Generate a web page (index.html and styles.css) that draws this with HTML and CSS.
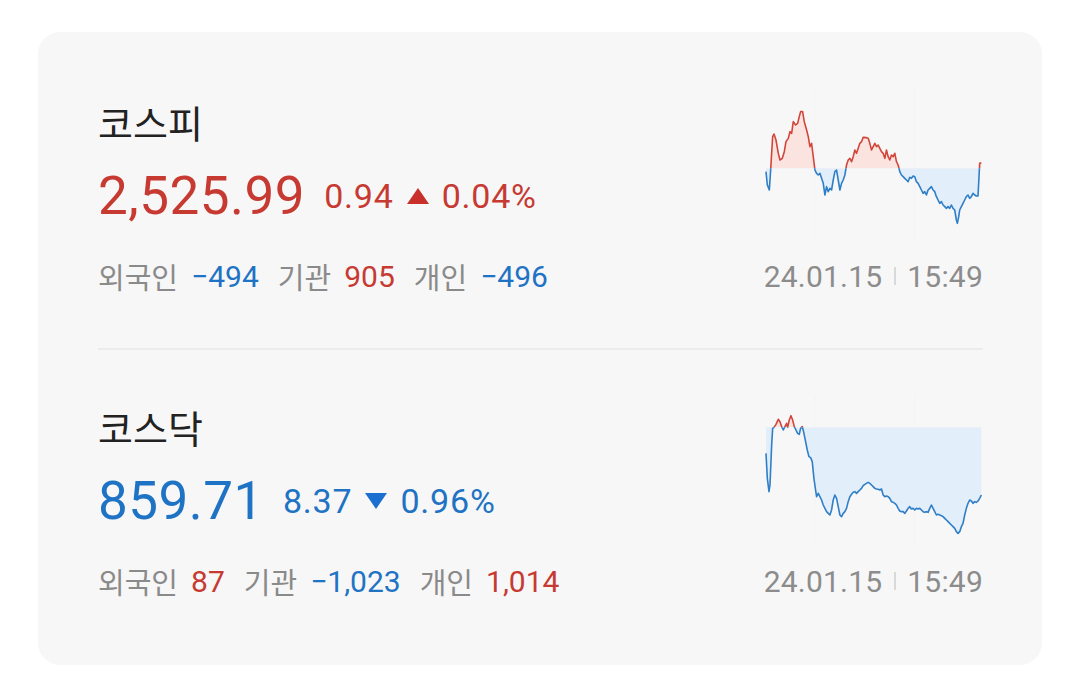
FILE: index.html
```html
<!DOCTYPE html>
<html lang="ko">
<head>
  <meta charset="UTF-8">
  <title>코스피 · 코스닥</title>
  <link rel="stylesheet" href="styles.css">
</head>
<body>
  <div class="card">
    <section class="index">
      <div class="info">
        <h2 class="name">코스피</h2>
        <div class="price up">
          <span class="value">2,525.99</span>
          <span class="change">0.94</span>
          <svg class="arrow" width="22" height="16" viewBox="0 0 22 16"><path d="M11 0 L22 16 L0 16 Z"/></svg>
          <span class="change">0.04%</span>
        </div>
        <div class="flow">
          <span class="label">외국인</span><span class="num down">−494</span>
          <span class="label">기관</span><span class="num up">905</span>
          <span class="label">개인</span><span class="num down">−496</span>
        </div>
      </div>
      <div class="side">
        <svg class="chart" width="218" height="150" viewBox="45 0 655 450" preserveAspectRatio="none">
          <defs>
            <clipPath id="k1-top"><rect x="0" y="0" width="750" height="235"/></clipPath>
            <clipPath id="k1-bot"><rect x="0" y="235" width="750" height="215"/></clipPath>
          </defs>
          <line class="grid" x1="195" y1="0" x2="195" y2="450"/>
          <line class="grid" x1="495" y1="0" x2="495" y2="450"/>
          <path class="area-up" clip-path="url(#k1-top)" d="M48,245 L52,285 58,300 62,240 68,140 72,132 78,150 85,190 90,210 97,205 103,185 108,155 115,145 120,125 125,130 130,95 137,105 143,100 148,80 152,65 158,65 163,95 170,120 175,140 180,170 185,160 190,200 195,240 200,250 205,255 210,250 215,265 220,280 225,315 230,290 235,305 240,295 245,300 250,270 255,245 260,240 265,270 270,300 275,280 280,270 285,255 290,225 295,210 300,205 305,215 310,200 315,180 320,190 325,175 330,160 335,155 340,142 350,143 355,145 360,160 365,180 370,170 375,160 380,170 385,165 390,175 395,185 400,190 405,205 410,180 415,200 420,210 425,195 430,200 435,190 440,215 445,225 450,245 455,255 460,260 465,265 470,270 475,275 480,262 485,265 490,258 495,260 500,275 505,280 510,290 515,300 520,310 525,305 530,315 535,300 540,295 545,290 550,300 555,305 560,320 565,330 570,340 575,335 580,345 585,350 590,355 595,350 600,355 605,345 610,355 615,360 620,390 623,400 627,380 630,360 635,350 640,340 645,330 650,320 655,315 660,325 665,320 670,310 675,315 680,318 685,318 688,260 690,220 695,218 L695,235 L48,235 Z"/>
          <path class="area-down" clip-path="url(#k1-bot)" d="M48,245 L52,285 58,300 62,240 68,140 72,132 78,150 85,190 90,210 97,205 103,185 108,155 115,145 120,125 125,130 130,95 137,105 143,100 148,80 152,65 158,65 163,95 170,120 175,140 180,170 185,160 190,200 195,240 200,250 205,255 210,250 215,265 220,280 225,315 230,290 235,305 240,295 245,300 250,270 255,245 260,240 265,270 270,300 275,280 280,270 285,255 290,225 295,210 300,205 305,215 310,200 315,180 320,190 325,175 330,160 335,155 340,142 350,143 355,145 360,160 365,180 370,170 375,160 380,170 385,165 390,175 395,185 400,190 405,205 410,180 415,200 420,210 425,195 430,200 435,190 440,215 445,225 450,245 455,255 460,260 465,265 470,270 475,275 480,262 485,265 490,258 495,260 500,275 505,280 510,290 515,300 520,310 525,305 530,315 535,300 540,295 545,290 550,300 555,305 560,320 565,330 570,340 575,335 580,345 585,350 590,355 595,350 600,355 605,345 610,355 615,360 620,390 623,400 627,380 630,360 635,350 640,340 645,330 650,320 655,315 660,325 665,320 670,310 675,315 680,318 685,318 688,260 690,220 695,218 L695,235 L48,235 Z"/>
          <path class="line-up" clip-path="url(#k1-top)" vector-effect="non-scaling-stroke" d="M48,245 L52,285 58,300 62,240 68,140 72,132 78,150 85,190 90,210 97,205 103,185 108,155 115,145 120,125 125,130 130,95 137,105 143,100 148,80 152,65 158,65 163,95 170,120 175,140 180,170 185,160 190,200 195,240 200,250 205,255 210,250 215,265 220,280 225,315 230,290 235,305 240,295 245,300 250,270 255,245 260,240 265,270 270,300 275,280 280,270 285,255 290,225 295,210 300,205 305,215 310,200 315,180 320,190 325,175 330,160 335,155 340,142 350,143 355,145 360,160 365,180 370,170 375,160 380,170 385,165 390,175 395,185 400,190 405,205 410,180 415,200 420,210 425,195 430,200 435,190 440,215 445,225 450,245 455,255 460,260 465,265 470,270 475,275 480,262 485,265 490,258 495,260 500,275 505,280 510,290 515,300 520,310 525,305 530,315 535,300 540,295 545,290 550,300 555,305 560,320 565,330 570,340 575,335 580,345 585,350 590,355 595,350 600,355 605,345 610,355 615,360 620,390 623,400 627,380 630,360 635,350 640,340 645,330 650,320 655,315 660,325 665,320 670,310 675,315 680,318 685,318 688,260 690,220 695,218"/>
          <path class="line-down" clip-path="url(#k1-bot)" vector-effect="non-scaling-stroke" d="M48,245 L52,285 58,300 62,240 68,140 72,132 78,150 85,190 90,210 97,205 103,185 108,155 115,145 120,125 125,130 130,95 137,105 143,100 148,80 152,65 158,65 163,95 170,120 175,140 180,170 185,160 190,200 195,240 200,250 205,255 210,250 215,265 220,280 225,315 230,290 235,305 240,295 245,300 250,270 255,245 260,240 265,270 270,300 275,280 280,270 285,255 290,225 295,210 300,205 305,215 310,200 315,180 320,190 325,175 330,160 335,155 340,142 350,143 355,145 360,160 365,180 370,170 375,160 380,170 385,165 390,175 395,185 400,190 405,205 410,180 415,200 420,210 425,195 430,200 435,190 440,215 445,225 450,245 455,255 460,260 465,265 470,270 475,275 480,262 485,265 490,258 495,260 500,275 505,280 510,290 515,300 520,310 525,305 530,315 535,300 540,295 545,290 550,300 555,305 560,320 565,330 570,340 575,335 580,345 585,350 590,355 595,350 600,355 605,345 610,355 615,360 620,390 623,400 627,380 630,360 635,350 640,340 645,330 650,320 655,315 660,325 665,320 670,310 675,315 680,318 685,318 688,260 690,220 695,218"/>
        </svg>
        <div class="time">
          <span>24.01.15</span><span class="sep"></span><span>15:49</span>
        </div>
      </div>
    </section>

    <hr class="divider">

    <section class="index">
      <div class="info">
        <h2 class="name">코스닥</h2>
        <div class="price down">
          <span class="value">859.71</span>
          <span class="change">8.37</span>
          <svg class="arrow" width="22" height="16" viewBox="0 0 22 16"><path d="M0 0 L22 0 L11 16 Z"/></svg>
          <span class="change">0.96%</span>
        </div>
        <div class="flow">
          <span class="label">외국인</span><span class="num up">87</span>
          <span class="label">기관</span><span class="num down">−1,023</span>
          <span class="label">개인</span><span class="num up">1,014</span>
        </div>
      </div>
      <div class="side">
        <svg class="chart" width="218" height="150" viewBox="45 0 655 450" preserveAspectRatio="none">
          <defs>
            <clipPath id="k2-top"><rect x="0" y="0" width="750" height="97"/></clipPath>
            <clipPath id="k2-bot"><rect x="0" y="97" width="750" height="353"/></clipPath>
          </defs>
          <line class="grid" x1="195" y1="0" x2="195" y2="450"/>
          <line class="grid" x1="495" y1="0" x2="495" y2="450"/>
          <path class="area-up" clip-path="url(#k2-top)" d="M48,175 L52,250 57,290 60,270 65,150 68,100 72,97 78,88 85,73 90,80 95,95 100,105 105,95 110,85 113,97 118,75 123,62 128,75 133,95 138,105 143,115 148,118 152,100 157,95 162,115 167,140 172,165 177,185 182,188 187,200 192,250 197,285 200,305 205,295 210,305 215,315 220,330 225,340 230,350 235,355 240,360 245,345 250,315 255,300 260,310 265,335 270,360 275,365 280,355 285,350 290,340 295,320 300,305 305,298 310,292 315,290 320,295 325,290 330,285 335,280 340,272 345,268 350,265 355,262 360,265 365,270 370,275 375,280 380,282 385,283 390,285 395,282 400,300 405,305 410,303 415,305 420,310 425,320 430,322 435,325 440,330 445,340 450,348 455,350 460,350 465,355 470,348 475,340 480,335 485,342 490,340 495,345 500,340 505,342 510,340 515,345 520,350 525,352 530,350 535,352 540,340 545,330 550,340 555,350 560,360 565,358 570,360 575,362 580,365 585,370 590,375 595,380 600,385 605,390 610,395 615,400 620,410 625,415 630,410 635,395 640,385 645,360 650,340 655,325 660,315 665,318 670,325 675,320 680,322 685,318 690,310 695,300 L695,97 L48,97 Z"/>
          <path class="area-down" clip-path="url(#k2-bot)" d="M48,175 L52,250 57,290 60,270 65,150 68,100 72,97 78,88 85,73 90,80 95,95 100,105 105,95 110,85 113,97 118,75 123,62 128,75 133,95 138,105 143,115 148,118 152,100 157,95 162,115 167,140 172,165 177,185 182,188 187,200 192,250 197,285 200,305 205,295 210,305 215,315 220,330 225,340 230,350 235,355 240,360 245,345 250,315 255,300 260,310 265,335 270,360 275,365 280,355 285,350 290,340 295,320 300,305 305,298 310,292 315,290 320,295 325,290 330,285 335,280 340,272 345,268 350,265 355,262 360,265 365,270 370,275 375,280 380,282 385,283 390,285 395,282 400,300 405,305 410,303 415,305 420,310 425,320 430,322 435,325 440,330 445,340 450,348 455,350 460,350 465,355 470,348 475,340 480,335 485,342 490,340 495,345 500,340 505,342 510,340 515,345 520,350 525,352 530,350 535,352 540,340 545,330 550,340 555,350 560,360 565,358 570,360 575,362 580,365 585,370 590,375 595,380 600,385 605,390 610,395 615,400 620,410 625,415 630,410 635,395 640,385 645,360 650,340 655,325 660,315 665,318 670,325 675,320 680,322 685,318 690,310 695,300 L695,97 L48,97 Z"/>
          <path class="line-up" clip-path="url(#k2-top)" vector-effect="non-scaling-stroke" d="M48,175 L52,250 57,290 60,270 65,150 68,100 72,97 78,88 85,73 90,80 95,95 100,105 105,95 110,85 113,97 118,75 123,62 128,75 133,95 138,105 143,115 148,118 152,100 157,95 162,115 167,140 172,165 177,185 182,188 187,200 192,250 197,285 200,305 205,295 210,305 215,315 220,330 225,340 230,350 235,355 240,360 245,345 250,315 255,300 260,310 265,335 270,360 275,365 280,355 285,350 290,340 295,320 300,305 305,298 310,292 315,290 320,295 325,290 330,285 335,280 340,272 345,268 350,265 355,262 360,265 365,270 370,275 375,280 380,282 385,283 390,285 395,282 400,300 405,305 410,303 415,305 420,310 425,320 430,322 435,325 440,330 445,340 450,348 455,350 460,350 465,355 470,348 475,340 480,335 485,342 490,340 495,345 500,340 505,342 510,340 515,345 520,350 525,352 530,350 535,352 540,340 545,330 550,340 555,350 560,360 565,358 570,360 575,362 580,365 585,370 590,375 595,380 600,385 605,390 610,395 615,400 620,410 625,415 630,410 635,395 640,385 645,360 650,340 655,325 660,315 665,318 670,325 675,320 680,322 685,318 690,310 695,300"/>
          <path class="line-down" clip-path="url(#k2-bot)" vector-effect="non-scaling-stroke" d="M48,175 L52,250 57,290 60,270 65,150 68,100 72,97 78,88 85,73 90,80 95,95 100,105 105,95 110,85 113,97 118,75 123,62 128,75 133,95 138,105 143,115 148,118 152,100 157,95 162,115 167,140 172,165 177,185 182,188 187,200 192,250 197,285 200,305 205,295 210,305 215,315 220,330 225,340 230,350 235,355 240,360 245,345 250,315 255,300 260,310 265,335 270,360 275,365 280,355 285,350 290,340 295,320 300,305 305,298 310,292 315,290 320,295 325,290 330,285 335,280 340,272 345,268 350,265 355,262 360,265 365,270 370,275 375,280 380,282 385,283 390,285 395,282 400,300 405,305 410,303 415,305 420,310 425,320 430,322 435,325 440,330 445,340 450,348 455,350 460,350 465,355 470,348 475,340 480,335 485,342 490,340 495,345 500,340 505,342 510,340 515,345 520,350 525,352 530,350 535,352 540,340 545,330 550,340 555,350 560,360 565,358 570,360 575,362 580,365 585,370 590,375 595,380 600,385 605,390 610,395 615,400 620,410 625,415 630,410 635,395 640,385 645,360 650,340 655,325 660,315 665,318 670,325 675,320 680,322 685,318 690,310 695,300"/>
        </svg>
        <div class="time">
          <span>24.01.15</span><span class="sep"></span><span>15:49</span>
        </div>
      </div>
    </section>
  </div>
</body>
</html>
```

FILE: styles.css
```css
* { box-sizing: border-box; margin: 0; padding: 0 }
html, body { height: 100% }
body {
  background: #fff;
  font-family: Roboto, "Noto Sans CJK KR", sans-serif;
  color: #222;
}
.card {
  margin: 32px 38px 0;
  width: 1004px;
  height: 633px;
  padding: 70px 59px 0 60px;
  background: #f7f7f7;
  border-radius: 22px;
}
.index {
  display: flex;
  justify-content: space-between;
}
.info {
  display: flex;
  flex-direction: column;
}
.name {
  font-size: 38px;
  font-weight: 400;
  line-height: 46px;
  color: #222;
}
.price {
  display: flex;
  align-items: center;
  height: 64px;
  margin-top: 16px;
}
.price .value {
  font-size: 53px;
  letter-spacing: 0.5px;
  margin-right: 19px;
}
.price .change {
  font-size: 34px;
  letter-spacing: 0.8px;
}
.price .arrow {
  margin: 0 13px 0 13px;
}
.up { color: #c63a32; fill: #c9302a }
.down { color: #1f73c4; fill: #1a6fd0 }
.flow {
  display: flex;
  align-items: center;
  height: 36px;
  margin-top: 30px;
  font-size: 29px;
}
.flow .label { color: #8a8a8a; margin-right: 13px }
.flow .num { margin-right: 19px; font-size: 30px }
.flow .num:last-child { margin-right: 0 }
.side {
  display: flex;
  flex-direction: column;
  justify-content: space-between;
  align-items: flex-end;
}
.chart {
  display: block;
  margin-top: -12px;
}
.grid { stroke: #efefef; stroke-width: 1.5 }
.area-up { fill: #fbe3e0 }
.area-down { fill: #e2eef9 }
.line-up { fill: none; stroke: #d2463a; stroke-width: 1.6; stroke-linejoin: round }
.line-down { fill: none; stroke: #2f7ec8; stroke-width: 1.6; stroke-linejoin: round }
.time {
  display: flex;
  align-items: center;
  height: 36px;
  font-size: 30px;
  letter-spacing: 0.2px;
  color: #8c8c8c;
}
.time .sep {
  width: 2px;
  height: 18px;
  margin: 0 11px 0 12px;
  background: #d9d9d9;
}
.divider {
  border: none;
  border-top: 2px solid #ececec;
  margin: 54px 0 57px;
}
```
